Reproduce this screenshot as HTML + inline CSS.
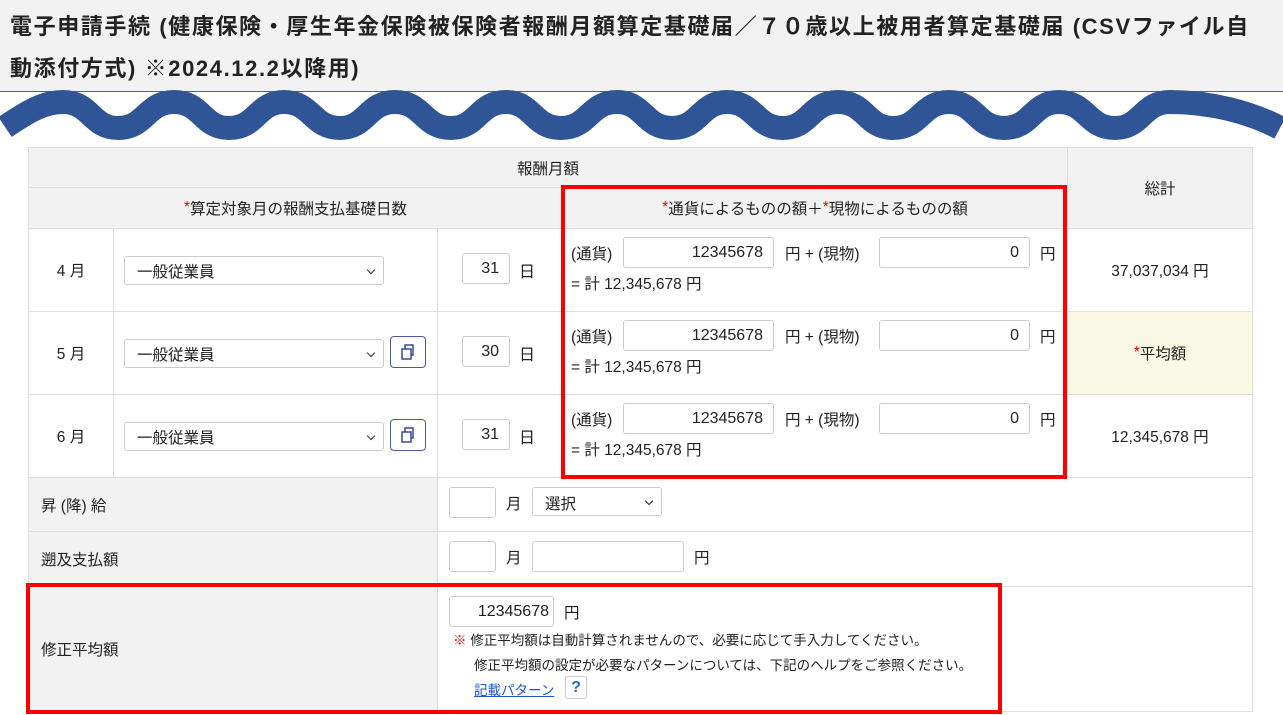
<!DOCTYPE html>
<html><head><meta charset="utf-8"><style>
*{box-sizing:border-box;margin:0;padding:0}
body{width:1283px;height:715px;overflow:hidden;background:#fff;font-family:"Liberation Sans","Noto Sans CJK JP",sans-serif;color:#222;font-size:15.5px;position:relative}
.a{position:absolute}
.hd{left:0;top:0;width:1283px;height:92px;background:#f2f2f2;border-bottom:1px solid #5a5a9a}
.t{left:10px;font-weight:bold;font-size:22px;letter-spacing:1.6px;color:#222;white-space:nowrap}
.c{position:absolute;border:1px solid #ddd;display:flex;align-items:center}
.g{background:#f2f2f2}
.cen{justify-content:center}
.inp{position:absolute;border:1px solid #ccc;border-radius:3px;background:#fff;height:31px;display:flex;align-items:center;justify-content:flex-end;padding-right:10px;font-size:16px}
.sel{position:absolute;border:1px solid #ccc;border-radius:3px;background:#fff;height:29px;display:flex;align-items:center;padding-left:12px;font-size:15.5px}
.sel:after{content:"";position:absolute;right:9px;top:10px;width:5px;height:5px;border-right:1.5px solid #333;border-bottom:1.5px solid #333;transform:rotate(45deg)}
.btn{position:absolute;width:36px;height:32px;border:1px solid #4a5aa8;border-radius:4px;background:#fff}
.red{position:absolute;border:4px solid #f00}
.tx{position:absolute;white-space:nowrap}
.r{color:#e00}
</style></head><body>
<div class="a hd"></div>
<div class="a t" style="top:9px">電子申請手続 (健康保険・厚生年金保険被保険者報酬月額算定基礎届／７０歳以上被用者算定基礎届 (CSVファイル自</div>
<div class="a t" style="top:51px">動添付方式) ※2024.12.2以降用)</div>
<svg class="a" style="left:0;top:0" width="1283" height="150"><path d="M5 127 C 30 110, 45 102, 63 102 C 91 102,91 128,118 128 C 146 128,146 102,174 102 C 202 102,202 128,229 128 C 257 128,257 102,284 102 C 312 102,312 128,340 128 C 367 128,367 102,395 102 C 423 102,423 128,451 128 C 478 128,478 102,506 102 C 533 102,533 128,561 128 C 589 128,589 102,617 102 C 644 102,644 128,672 128 C 700 128,700 102,727 102 C 755 102,755 128,783 128 C 810 128,810 102,838 102 C 866 102,866 128,893 128 C 921 128,921 102,949 102 C 976 102,976 128,1004 128 C 1032 128,1032 102,1059 102 C 1087 102,1087 128,1115 128 C 1142 128,1142 102,1170 102 C 1210 102,1250 112,1280 128" fill="none" stroke="#2f5597" stroke-width="24"/></svg>

<div class="c g cen" style="left:28px;top:147px;width:1040px;height:41px">報酬月額</div>
<div class="c g cen" style="left:1067px;top:147px;width:186px;height:82px">総計</div>
<div class="c g cen" style="left:28px;top:187px;width:535px;height:42px"><span class="r">*</span>算定対象月の報酬支払基礎日数</div>
<div class="c g cen" style="left:562px;top:187px;width:506px;height:42px"><span class="r">*</span>通貨によるものの額＋<span class="r">*</span>現物によるものの額</div>

<div class="c cen" style="left:28px;top:228px;width:86px;height:84px">4 月</div>
<div class="c" style="left:113px;top:228px;width:325px;height:84px"></div>
<div class="c" style="left:437px;top:228px;width:126px;height:84px"></div>
<div class="c" style="left:562px;top:228px;width:506px;height:84px"></div>
<div class="c cen" style="left:1067px;top:228px;width:186px;height:84px">37,037,034 円</div>

<div class="c cen" style="left:28px;top:311px;width:86px;height:84px">5 月</div>
<div class="c" style="left:113px;top:311px;width:325px;height:84px"></div>
<div class="c" style="left:437px;top:311px;width:126px;height:84px"></div>
<div class="c" style="left:562px;top:311px;width:506px;height:84px"></div>
<div class="c cen" style="left:1067px;top:311px;width:186px;height:84px;background:#fafae4"><span class="r">*</span>平均額</div>

<div class="c cen" style="left:28px;top:394px;width:86px;height:84px">6 月</div>
<div class="c" style="left:113px;top:394px;width:325px;height:84px"></div>
<div class="c" style="left:437px;top:394px;width:126px;height:84px"></div>
<div class="c" style="left:562px;top:394px;width:506px;height:84px"></div>
<div class="c cen" style="left:1067px;top:394px;width:186px;height:84px">12,345,678 円</div>

<div class="c g" style="left:28px;top:477px;width:410px;height:55px;padding-left:12px">昇 (降) 給</div>
<div class="c" style="left:437px;top:477px;width:816px;height:55px"></div>
<div class="c g" style="left:28px;top:531px;width:410px;height:56px;padding-left:12px">遡及支払額</div>
<div class="c" style="left:437px;top:531px;width:816px;height:56px"></div>
<div class="c g" style="left:28px;top:586px;width:410px;height:126px;padding-left:12px">修正平均額</div>
<div class="c" style="left:437px;top:586px;width:816px;height:126px"></div>

<div class="sel" style="left:124px;top:256px;width:260px">一般従業員</div>
<div class="sel" style="left:124px;top:339px;width:260px">一般従業員</div>
<div class="sel" style="left:124px;top:422px;width:260px">一般従業員</div>
<div class="btn" style="left:390px;top:336px"><svg width="34" height="30"><rect x="11" y="12" width="9" height="10" fill="none" stroke="#3a4a9a" stroke-width="1.5"/><path d="M14 12 V8 H22 V18 H20" fill="none" stroke="#3a4a9a" stroke-width="1.5"/></svg></div>
<div class="btn" style="left:390px;top:419px"><svg width="34" height="30"><rect x="11" y="12" width="9" height="10" fill="none" stroke="#3a4a9a" stroke-width="1.5"/><path d="M14 12 V8 H22 V18 H20" fill="none" stroke="#3a4a9a" stroke-width="1.5"/></svg></div>
<div class="inp" style="left:462px;top:253px;width:48px">31</div><div class="tx" style="left:519px;top:258px;font-size:16px">日</div>
<div class="inp" style="left:462px;top:336px;width:48px">30</div><div class="tx" style="left:519px;top:341px;font-size:16px">日</div>
<div class="inp" style="left:462px;top:419px;width:48px">31</div><div class="tx" style="left:519px;top:424px;font-size:16px">日</div>

<div class="tx" style="left:571px;top:242px">(通貨)</div><div class="inp" style="left:623px;top:237px;width:151px">12345678</div><div class="tx" style="left:785px;top:242px">円 + (現物)</div><div class="inp" style="left:879px;top:237px;width:151px">0</div><div class="tx" style="left:1040px;top:242px">円</div><div class="tx" style="left:571px;top:272px">= 計 12,345,678 円</div>
<div class="tx" style="left:571px;top:325px">(通貨)</div><div class="inp" style="left:623px;top:320px;width:151px">12345678</div><div class="tx" style="left:785px;top:325px">円 + (現物)</div><div class="inp" style="left:879px;top:320px;width:151px">0</div><div class="tx" style="left:1040px;top:325px">円</div><div class="tx" style="left:571px;top:355px">= 計 12,345,678 円</div>
<div class="tx" style="left:571px;top:408px">(通貨)</div><div class="inp" style="left:623px;top:403px;width:151px">12345678</div><div class="tx" style="left:785px;top:408px">円 + (現物)</div><div class="inp" style="left:879px;top:403px;width:151px">0</div><div class="tx" style="left:1040px;top:408px">円</div><div class="tx" style="left:571px;top:438px">= 計 12,345,678 円</div>

<div class="inp" style="left:449px;top:487px;width:47px"></div><div class="tx" style="left:506px;top:492px">月</div>
<div class="sel" style="left:532px;top:487px;width:130px;align-items:flex-start;padding-top:4px">選択</div>
<div class="inp" style="left:449px;top:541px;width:47px"></div><div class="tx" style="left:506px;top:546px">月</div>
<div class="inp" style="left:532px;top:541px;width:152px"></div><div class="tx" style="left:694px;top:546px">円</div>

<div class="inp" style="left:449px;top:596px;width:105px;padding-right:4px">12345678</div><div class="tx" style="left:564px;top:601px">円</div>
<div class="tx" style="left:453px;top:629px;font-size:13.5px"><span class="r">※</span> 修正平均額は自動計算されませんので、必要に応じて手入力してください。</div>
<div class="tx" style="left:474px;top:654px;font-size:13.5px">修正平均額の設定が必要なパターンについては、下記のヘルプをご参照ください。</div>
<div class="tx" style="left:474px;top:679px;font-size:13.5px;color:#2255cc;text-decoration:underline">記載パターン</div>
<div class="a" style="left:565px;top:676px;width:22px;height:23px;border:1px solid #ccc;border-radius:3px;color:#1a6fc4;font-weight:bold;font-size:16px;text-align:center;line-height:21px">?</div>

<div class="red" style="left:561px;top:185px;width:506px;height:294px"></div>
<div class="red" style="left:26px;top:583px;width:976px;height:131px"></div>
</body></html>
